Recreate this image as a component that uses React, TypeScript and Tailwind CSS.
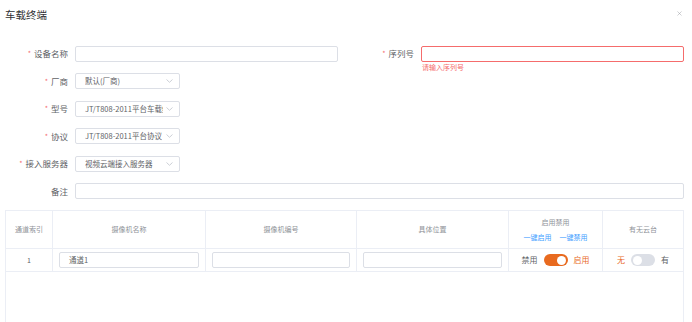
import { X } from 'lucide-react'

const font = { fontFamily: '"Noto Sans CJK SC", "Noto Sans", sans-serif' }

function Chevron() {
  return (
    <svg width="7" height="4" viewBox="0 0 7 4" className="shrink-0">
      <path d="M0.5 0.5 L3.5 3.3 L6.5 0.5" fill="none" stroke="#c0c4cc" strokeWidth="0.8" />
    </svg>
  )
}

function Label({ text, required = true }: { text: string; required?: boolean }) {
  return (
    <div className="flex w-[63px] shrink-0 items-center justify-end text-[8.5px] text-[#606266]">
      {required && <span className="mr-[3px] text-[7px] text-[#f56c6c]">*</span>}
      {text}
    </div>
  )
}

function Select({ value }: { value: string }) {
  return (
    <div className="flex h-[16px] w-[105px] items-center justify-between gap-[3px] rounded-[2px] border border-[#dcdfe6] pl-[9px] pr-[6px]">
      <span className="min-w-0 overflow-hidden whitespace-nowrap text-[7.5px] text-[#606266]">{value}</span>
      <Chevron />
    </div>
  )
}

function Switch({ on }: { on: boolean }) {
  return (
    <div
      className={
        on
          ? 'flex h-[12px] w-[24px] items-center justify-end rounded-full bg-[#e86a1f] px-[1.5px]'
          : 'flex h-[12px] w-[24px] items-center justify-start rounded-full bg-[#dcdfe6] px-[1.5px]'
      }
    >
      <div className="h-[9px] w-[9px] rounded-full bg-white" />
    </div>
  )
}

export default function App() {
  const cell = 'flex items-center justify-center border-r border-[#ebeef5]'
  return (
    <div style={font} className="relative h-[322px] w-[692px] overflow-hidden bg-white">
      <div className="flex items-center px-[5px] pt-[8px]">
        <span className="text-[10.5px] leading-[14px] text-[#303133]">车载终端</span>
      </div>
      <X className="absolute right-[9px] top-[10px] h-[7px] w-[7px] text-[#909399]" strokeWidth={1.5} />

      <div className="mt-[23.5px] flex flex-col gap-[11.5px] pl-[5px] pr-[8px]">
        <div className="grid grid-cols-2 gap-x-[13px]">
          <div className="flex h-[16px] gap-[7px]">
            <Label text="设备名称" />
            <div className="flex-1 rounded-[2px] border border-[#dcdfe6]" />
          </div>
          <div className="flex h-[16px] gap-[7px]">
            <Label text="序列号" />
            <div className="relative flex-1 rounded-[2px] border border-[#f56c6c]">
              <span className="absolute left-0 top-[15px] whitespace-nowrap text-[7px] leading-[10px] text-[#f56c6c]">
                请输入序列号
              </span>
            </div>
          </div>
        </div>
        <div className="flex h-[16px] gap-[7px]">
          <Label text="厂商" />
          <Select value="默认(厂商)" />
        </div>
        <div className="flex h-[16px] gap-[7px]">
          <Label text="型号" />
          <Select value="JT/T808-2011平台车载终端" />
        </div>
        <div className="flex h-[16px] gap-[7px]">
          <Label text="协议" />
          <Select value="JT/T808-2011平台协议" />
        </div>
        <div className="flex h-[16px] gap-[7px]">
          <Label text="接入服务器" />
          <Select value="视频云端接入服务器" />
        </div>
        <div className="flex h-[16px] gap-[7px]">
          <Label text="备注" required={false} />
          <div className="flex-1 rounded-[2px] border border-[#dcdfe6]" />
        </div>
      </div>

      <div className="ml-[5px] mr-[8px] mt-[11px] border border-[#ebeef5] text-[7px]">
        <div className="grid h-[38px] grid-cols-[47px_153px_151px_152px_94px_1fr] border-b border-[#ebeef5] text-[#909399]">
          <div className={cell}>通道索引</div>
          <div className={cell}>摄像机名称</div>
          <div className={cell}>摄像机编号</div>
          <div className={cell}>具体位置</div>
          <div className="flex flex-col items-center justify-center gap-[5px] border-r border-[#ebeef5]">
            <span>启用禁用</span>
            <div className="flex gap-[8px] text-[#409eff]">
              <span>一键启用</span>
              <span>一键禁用</span>
            </div>
          </div>
          <div className="flex items-center justify-center">有无云台</div>
        </div>
        <div className="grid h-[23px] grid-cols-[47px_153px_151px_152px_94px_1fr] border-b border-[#ebeef5] text-[#606266]">
          <div className={cell}>1</div>
          <div className="flex items-center border-r border-[#ebeef5] px-[6px]">
            <div className="flex h-[16px] w-full items-center rounded-[2px] border border-[#dcdfe6] px-[9px] text-[7.5px]">
              通道1
            </div>
          </div>
          <div className="flex items-center border-r border-[#ebeef5] px-[6px]">
            <div className="h-[16px] w-full rounded-[2px] border border-[#dcdfe6]" />
          </div>
          <div className="flex items-center border-r border-[#ebeef5] px-[6px]">
            <div className="h-[16px] w-full rounded-[2px] border border-[#dcdfe6]" />
          </div>
          <div className="flex items-center justify-center gap-[6px] border-r border-[#ebeef5] text-[8px]">
            <span>禁用</span>
            <Switch on />
            <span className="text-[#e86a1f]">启用</span>
          </div>
          <div className="flex items-center justify-center gap-[6px] text-[8px]">
            <span className="text-[#e86a1f]">无</span>
            <Switch on={false} />
            <span>有</span>
          </div>
        </div>
        <div className="h-[80px]" />
      </div>
    </div>
  )
}
